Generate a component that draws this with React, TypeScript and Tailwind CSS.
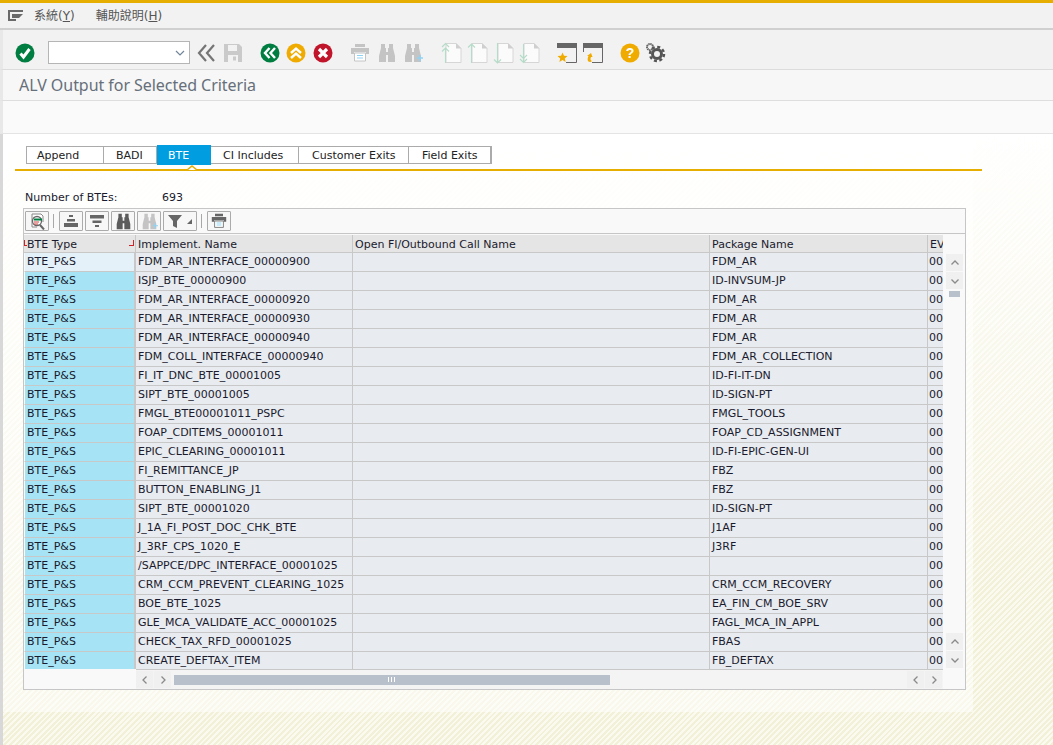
import React from "react";

const rows: [string, string][] = [
  ["FDM_AR_INTERFACE_00000900", "FDM_AR"],
  ["ISJP_BTE_00000900", "ID-INVSUM-JP"],
  ["FDM_AR_INTERFACE_00000920", "FDM_AR"],
  ["FDM_AR_INTERFACE_00000930", "FDM_AR"],
  ["FDM_AR_INTERFACE_00000940", "FDM_AR"],
  ["FDM_COLL_INTERFACE_00000940", "FDM_AR_COLLECTION"],
  ["FI_IT_DNC_BTE_00001005", "ID-FI-IT-DN"],
  ["SIPT_BTE_00001005", "ID-SIGN-PT"],
  ["FMGL_BTE00001011_PSPC", "FMGL_TOOLS"],
  ["FOAP_CDITEMS_00001011", "FOAP_CD_ASSIGNMENT"],
  ["EPIC_CLEARING_00001011", "ID-FI-EPIC-GEN-UI"],
  ["FI_REMITTANCE_JP", "FBZ"],
  ["BUTTON_ENABLING_J1", "FBZ"],
  ["SIPT_BTE_00001020", "ID-SIGN-PT"],
  ["J_1A_FI_POST_DOC_CHK_BTE", "J1AF"],
  ["J_3RF_CPS_1020_E", "J3RF"],
  ["/SAPPCE/DPC_INTERFACE_00001025", ""],
  ["CRM_CCM_PREVENT_CLEARING_1025", "CRM_CCM_RECOVERY"],
  ["BOE_BTE_1025", "EA_FIN_CM_BOE_SRV"],
  ["GLE_MCA_VALIDATE_ACC_00001025", "FAGL_MCA_IN_APPL"],
  ["CHECK_TAX_RFD_00001025", "FBAS"],
  ["CREATE_DEFTAX_ITEM", "FB_DEFTAX"],
];

const Binoculars = ({ c = "#c4c4c4", plus = false, size = 20 }: { c?: string; plus?: boolean; size?: number }) => (
  <svg width={size} height={size} viewBox="0 0 20 20">
    <path d="M4 1h4v4h1v4h2V5h1V1h4v4l2 8v6h-7v-7H9v7H2v-6l2-8z" fill={c} />
    {plus && <path d="M14 15h6M17 12v6.500" stroke="#8fd3f4" strokeWidth="1.300" fill="none" />}
  </svg>
);

const Printer = ({ c = "#c4c4c4", size = 20 }: { c?: string; size?: number }) => (
  <svg width={size} height={size} viewBox="0 0 20 20">
    <path d="M5 1h10v3H5zM1 5h18v6h-3V9H4v2H1z" fill={c} />
    <path d="M4.500 10h11v8h-11z" fill="#fff" stroke={c} strokeWidth="1" />
    <path d="M7 12.500h6M7 15h6" stroke="#8fd3f4" strokeWidth="1.200" />
  </svg>
);

const Page = ({ kind }: { kind: number }) => {
  const arrow: Record<number, string> = {
    0: "M4.500 21V6M1 9.500l3.500-3.500 3.500 3.500M1 5l3.500-3.500L8 5",
    1: "M4.500 21V2M1 5.500L4.500 2 8 5.500",
    2: "M4.500 1v20M1 17.500L4.500 21 8 17.500",
    3: "M4.500 2v18M1 13l3.500 3.500L8 13M1 17l3.500 3.500L8 17",
  };
  return (
    <svg width="22" height="22" viewBox="0 0 22 22">
      <path d="M5 1.500h10l5 5v14H5z" fill="#fbfbfb" stroke="#d6d6d6" />
      <path d="M15 1v5.500h5.500z" fill="#cfcfcf" />
      <path d={arrow[kind]} fill="none" stroke="#b5dcc8" strokeWidth="1.100" />
    </svg>
  );
};

const Circle = ({ bg, d, w = 3 }: { bg: string; d: string; w?: number }) => (
  <svg width="20" height="20" viewBox="0 0 20 20">
    <circle cx="10" cy="10" r="9.500" fill={bg} />
    <path d={d} fill="none" stroke="#fff" strokeWidth={w} />
  </svg>
);

const TBtn = ({ children }: { children: React.ReactNode }) => (
  <div className="flex h-[20px] items-center justify-center rounded-[1px] border border-[#ababab] bg-[#f7f7f7]">
    {children}
  </div>
);

const Sep = () => <div className="ml-[2px] mr-[3px] h-[14px] w-px bg-[#a8a8a8]" />;

const Tab = ({ label, w, active, pl }: { label: string; w: string; active?: boolean; pl: string }) => (
  <div
    className={
      active
        ? "relative -my-[2px] flex h-[20px] items-center bg-[#009de0] text-white " + w + " " + pl
        : "flex items-center border-r border-[#ababab] text-[#222] " + w + " " + pl
    }
  >
    {label}
  </div>
);

const ScrollBtn = ({ dir }: { dir: "u" | "d" | "l" | "r" }) => {
  const d = { u: "M1.500 6.500L5 3l3.500 3.500", d: "M1.500 3.500L5 7l3.500-3.500", l: "M6.500 1.500L3 5l3.500 3.500", r: "M3.500 1.500L7 5 3.500 8.500" }[dir];
  return (
    <div className="flex h-[17px] w-[17px] items-center justify-center bg-[#f0f0f0]">
      <svg width="10" height="10" viewBox="0 0 10 10">
        <path d={d} fill="none" stroke="#8a8a8a" strokeWidth="1.300" />
      </svg>
    </div>
  );
};

const cols = "grid grid-cols-[112px_217px_357px_218px_16px]";

export default function App() {
  return (
    <div className="flex h-[745px] w-[1053px] flex-col overflow-hidden bg-white font-['DejaVu_Sans','Noto_Sans_CJK_TC',sans-serif] text-[11px] leading-none text-[#1a1a2e]">
      <div className="h-[3px] shrink-0 bg-[#e5ae00]" />
      {/* menu */}
      <div className="flex h-[27px] shrink-0 items-center border-b-2 border-[#d0d0d0] bg-[#f2f2f2] pl-[8px] text-[12px] text-[#555]">
        <svg width="16" height="12" viewBox="0 0 16 12">
          <path d="M0 0h15v2H2v7h6v2H0zM4 4h11L11 8H4z" fill="#6a6a6a" />
        </svg>
        <span className="ml-[10px]">系統(<u>Y</u>)</span>
        <span className="ml-[21px]">輔助說明(<u>H</u>)</span>
      </div>
      {/* toolbar */}
      <div className="flex h-[40px] shrink-0 items-center border-b border-l-[3px] border-b-[#dcdcdc] border-l-[#e8e8e8] bg-[#f2f2f2] pl-[12px] pt-[6px]">
        <Circle bg="#007d40" d="M5.500 10.500l3 3.500 6-8" />
        <div className="ml-[13px] flex h-[23px] w-[142px] items-center justify-end border border-[#b5b5b5] bg-white pr-[4px]">
          <svg width="10" height="8" viewBox="0 0 10 8">
            <path d="M1 2l4 4 4-4" fill="none" stroke="#71859a" strokeWidth="1.200" />
          </svg>
        </div>
        <svg className="ml-[7px]" width="20" height="18" viewBox="0 0 20 18">
          <path d="M9 1L2 9l7 8M17 1l-7 8 7 8" fill="none" stroke="#757575" strokeWidth="2.200" />
        </svg>
        <svg className="ml-[6px]" width="20" height="20" viewBox="0 0 20 20">
          <path d="M1 1h15l3 3v15H1z" fill="#cacaca" />
          <path d="M5 2h9v6H5z" fill="#f2f2f2" />
          <path d="M5 12h10v7H5z" fill="#f2f2f2" />
          <path d="M10 13.500h3v4h-3z" fill="#cacaca" />
        </svg>
        <div className="ml-[17px]">
          <Circle bg="#007d40" d="M9.500 5l-4.500 5 4.500 5M15 5l-4.500 5 4.500 5" w={2.400} />
        </div>
        <div className="ml-[6px]">
          <Circle bg="#f0ab00" d="M5 10l5-4.500 5 4.500M5 15l5-4.500 5 4.500" w={2.400} />
        </div>
        <div className="ml-[7px]">
          <Circle bg="#c0152a" d="M6 6l8 8M14 6l-8 8" w={3.200} />
        </div>
        <div className="ml-[17px]"><Printer /></div>
        <div className="ml-[7px]"><Binoculars /></div>
        <div className="ml-[6px]"><Binoculars plus /></div>
        <div className="ml-[18px] flex gap-[4px]">
          <Page kind={0} />
          <Page kind={1} />
          <Page kind={2} />
          <Page kind={3} />
        </div>
        <svg className="ml-[16px]" width="20" height="20" viewBox="0 0 20 20">
          <path d="M0 0h20v5H0z" fill="#666" />
          <path d="M19.500 5v14.500H9" fill="none" stroke="#666" />
          <path d="M5.500 9.500l1.500 3.300 3.500.3-2.700 2.300.9 3.500-3.200-1.900-3.100 1.900.8-3.500L.5 13.100l3.600-.3z" fill="#f0ab00" />
        </svg>
        <svg className="ml-[6px]" width="20" height="20" viewBox="0 0 20 20">
          <path d="M0 0h20v5H0z" fill="#666" />
          <path d="M.5 5v4M19.500 5v14.500H9" fill="none" stroke="#666" />
          <path d="M7 19c-2.500 0-3-3-1.500-6H4l4-3 1.500 4H8c-1 2-.5 3.500 1 4-.5.500-1.200 1-2 1z" fill="#f0ab00" />
        </svg>
        <div className="ml-[17px]">
          <svg width="20" height="20" viewBox="0 0 20 20">
            <circle cx="10" cy="10" r="9.500" fill="#f0ab00" />
            <text x="10" y="15" textAnchor="middle" fontSize="14" fontWeight="700" fill="#fff" fontFamily="Liberation Sans, sans-serif">?</text>
          </svg>
        </div>
        <svg className="ml-[4px] -mt-[1px]" width="22" height="22" viewBox="0 0 22 22">
          <circle cx="6" cy="6" r="3" fill="none" stroke="#666" strokeWidth="2" strokeDasharray="1.500 0.500" />
          <circle cx="13" cy="13" r="4.500" fill="none" stroke="#555" strokeWidth="3" />
          <circle cx="13" cy="13" r="7" fill="none" stroke="#555" strokeWidth="2.500" strokeDasharray="3 2.500" />
        </svg>
      </div>
      {/* title */}
      <div className="flex h-[31px] shrink-0 items-center border-b border-l-[3px] border-b-[#dedede] border-l-[#e8e8e8] bg-[#f7f7f7] pl-[16px] font-['Noto_Sans',sans-serif] text-[16px] tracking-[-0.05px] text-[#666f7a]">
        ALV Output for Selected Criteria
      </div>
      <div className="h-[33px] shrink-0 border-b border-l-[3px] border-b-[#e4e4e4] border-l-[#e8e8e8] bg-[#fafafa]" />
      {/* content */}
      <div className="flex min-h-0 flex-1 border-l-[3px] border-[#d8d8d8] bg-[linear-gradient(180deg,#ffffff_0%,rgba(255,255,255,0.8)_15%,rgba(255,255,255,0)_75%),repeating-linear-gradient(135deg,#f3f0d8_0px,#f3f0d8_2px,#fbfaf0_2px,#fbfaf0_4px)]">
        <div className="flex h-[578px] w-[970px] shrink-0 flex-col bg-[rgba(255,255,255,0.55)] pt-[12px]">
          {/* tabs */}
          <div className="ml-[23px] flex h-[18px] w-[466px] shrink-0 border border-[#ababab] bg-white">
            <Tab label="Append" w="w-[77px]" pl="pl-[10px]" />
            <Tab label="BADI" w="w-[53px]" pl="pl-[12px]" />
            <Tab label="BTE" w="w-[54px]" pl="pl-[11px]" active />
            <Tab label="CI Includes" w="w-[88px]" pl="pl-[12px]" />
            <Tab label="Customer Exits" w="w-[110px]" pl="pl-[13px]" />
            <Tab label="Field Exits" w="w-[82px]" pl="pl-[13px]" />
          </div>
          <div className="relative ml-[12px] mt-[5px] h-[2px] w-[967px] shrink-0 bg-[#e5ae00]">
            <svg className="absolute left-[171px] top-[-4px]" width="12" height="5" viewBox="0 0 12 5">
              <path d="M0 5h1L6 1l5 4h1" fill="#fff" stroke="#e5ae00" strokeWidth="1.500" />
            </svg>
          </div>
          <div className="ml-[22px] mt-[20px] flex h-[12px] shrink-0 items-center">
            <span className="w-[137px]">Number of BTEs:</span>
            <span>693</span>
          </div>
          {/* table */}
          <div className="ml-[20px] mt-[5px] flex h-[482px] w-[943px] shrink-0 flex-col border border-[#c6c6c6] bg-[#f9f9f9]">
            <div className="flex h-[25px] shrink-0 items-center gap-[2px] border-b border-[#c6c6c6] pl-[1px]">
              <div className="w-[24px]">
                <TBtn>
                  <svg width="17" height="17" viewBox="0 0 17 17">
                    <path d="M3 1h9l2 2v6M3 1v13h5" fill="#fff" stroke="#888" strokeWidth="1" />
                    <circle cx="8" cy="8" r="4.500" fill="#fff" stroke="#666" strokeWidth="1.300" />
                    <path d="M5 6.500h8" stroke="#007d40" strokeWidth="2" />
                    <path d="M5 9h5M5 11h4" stroke="#d04040" strokeWidth="1" />
                    <path d="M11 12l4 4.500" stroke="#666" strokeWidth="2" />
                  </svg>
                </TBtn>
              </div>
              <Sep />
              <div className="w-[24px]">
                <TBtn>
                  <svg width="16" height="14" viewBox="0 0 16 14">
                    <path d="M6 1h4v2H6zM4 5h8v2.500H4zM1 9h14v4H1z" fill="#666" />
                  </svg>
                </TBtn>
              </div>
              <div className="w-[24px]">
                <TBtn>
                  <svg width="16" height="14" viewBox="0 0 16 14">
                    <path d="M1 1h14v3.500H1zM3.500 6.500h9V9h-9zM6 11h4v2H6z" fill="#666" />
                  </svg>
                </TBtn>
              </div>
              <div className="w-[24px]">
                <TBtn><Binoculars c="#5c5c5c" size={17} /></TBtn>
              </div>
              <div className="w-[24px]">
                <TBtn><Binoculars plus size={17} /></TBtn>
              </div>
              <div className="w-[34px]">
                <TBtn>
                  <svg width="26" height="15" viewBox="0 0 26 15">
                    <path d="M1 1h14L10 7v7l-4-2V7z" fill="#666" />
                    <path d="M20 10l5-5v5z" fill="#666" />
                  </svg>
                </TBtn>
              </div>
              <Sep />
              <div className="w-[24px]">
                <TBtn><Printer c="#666" size={16} /></TBtn>
              </div>
            </div>
            <div className="flex min-h-0 flex-1">
              <div className="flex w-[919px] shrink-0 flex-col overflow-hidden pt-px">
                <div className={cols + " h-[18px] shrink-0 bg-[#e5e5e5]"}>
                  {["BTE Type", "Implement. Name", "Open FI/Outbound Call Name", "Package Name", "EV"].map((h, i) => (
                    <div key={h} className={"relative flex items-center overflow-hidden whitespace-nowrap border-b border-r border-[#c8c8c8] pt-[2px] " + (i === 0 ? "pl-[3px]" : "pl-[2px]")}>
                      {h}
                      {i === 0 && (
                        <>
                          <span className="absolute left-0 top-[5px] h-[6px] w-px bg-[#d0202a]" />
                          <span className="absolute left-0 top-[10px] h-px w-[3px] bg-[#d0202a]" />
                          <span className="absolute right-[1px] top-[5px] h-[6px] w-px bg-[#d0202a]" />
                          <span className="absolute right-[1px] top-[10px] h-px w-[5px] bg-[#d0202a]" />
                        </>
                      )}
                    </div>
                  ))}
                </div>
                <div className="h-[416px] shrink-0 overflow-hidden">
                  {rows.map(([a, b], i) => (
                    <div key={i} className={cols + " h-[19px] bg-[#e8ebef]"}>
                      <div className={"flex items-center border-b border-l border-r-2 border-b-[#c8c8c8] border-l-[#f9f9f9] border-r-[#c8c8c8] pb-[2px] pl-[2px] " + (i === 0 ? "bg-[#e4f1f9]" : "bg-[#a6e4f5]")}>BTE_P&amp;S</div>
                      <div className="flex items-center border-b border-r border-[#c8c8c8] pb-[2px] pl-[2px]">{a}</div>
                      <div className="border-b border-r border-[#c8c8c8]" />
                      <div className="flex items-center border-b border-r border-[#c8c8c8] pb-[2px] pl-[2px]">{b}</div>
                      <div className="flex items-center overflow-hidden border-b border-[#c8c8c8] pb-[2px] pl-[1px]">00</div>
                    </div>
                  ))}
                </div>
                {/* horizontal scrollbar */}
                <div className="ml-[112px] flex h-[20px] shrink-0 items-center border-t border-[#c8c8c8] bg-[#f4f4f4]">
                  <ScrollBtn dir="l" />
                  <div className="ml-[1px]"><ScrollBtn dir="r" /></div>
                  <div className="relative ml-[3px] flex h-[10px] w-[436px] items-center justify-center bg-[#b7c0cb]">
                    <span className="h-[5px] w-[8px] bg-[repeating-linear-gradient(90deg,#fff_0px,#fff_1px,transparent_1px,transparent_3px)]" />
                  </div>
                  <div className="ml-[297px]"><ScrollBtn dir="l" /></div>
                  <div className="ml-[1px]"><ScrollBtn dir="r" /></div>
                </div>
              </div>
              <div className="ml-[3px] flex w-[17px] flex-col pt-[20px]">
                <ScrollBtn dir="u" />
                <div className="mt-px"><ScrollBtn dir="d" /></div>
                <div className="ml-[3px] mt-[2px] h-[6px] w-[11px] bg-[#b7c0cb]" />
                <div className="h-[336px]" />
                <ScrollBtn dir="u" />
                <div className="mt-px"><ScrollBtn dir="d" /></div>
              </div>
            </div>
          </div>
        </div>
      </div>
    </div>
  );
}
